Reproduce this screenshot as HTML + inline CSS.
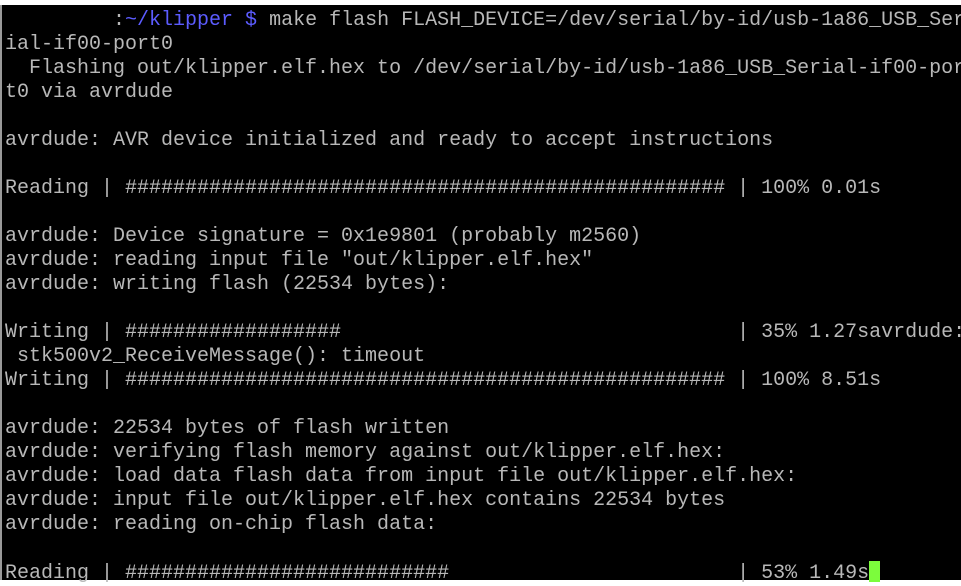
<!DOCTYPE html>
<html><head><style>
html,body{margin:0;padding:0;background:#fff;}
.t{position:absolute;left:0;top:5px;width:961px;height:575px;background:#000;border-left:2px solid #9a9a9a;box-sizing:border-box;}
pre{position:absolute;left:3px;top:4px;margin:0;font-family:"Liberation Mono","Courier New",monospace;font-size:20px;line-height:24px;color:#b8b8b8;white-space:pre;}
.b{color:#5c5cff}
.c{display:inline-block;width:11px;height:21px;background:#7cfc3c;vertical-align:-4px;}
</style></head><body><div class="t"><pre>         :<span class="b">~/klipper $</span> make flash FLASH_DEVICE=/dev/serial/by-id/usb-1a86_USB_Ser
ial-if00-port0
  Flashing out/klipper.elf.hex to /dev/serial/by-id/usb-1a86_USB_Serial-if00-por
t0 via avrdude

avrdude: AVR device initialized and ready to accept instructions

Reading | ################################################## | 100% 0.01s

avrdude: Device signature = 0x1e9801 (probably m2560)
avrdude: reading input file "out/klipper.elf.hex"
avrdude: writing flash (22534 bytes):

Writing | ##################                                 | 35% 1.27savrdude:
 stk500v2_ReceiveMessage(): timeout
Writing | ################################################## | 100% 8.51s

avrdude: 22534 bytes of flash written
avrdude: verifying flash memory against out/klipper.elf.hex:
avrdude: load data flash data from input file out/klipper.elf.hex:
avrdude: input file out/klipper.elf.hex contains 22534 bytes
avrdude: reading on-chip flash data:

Reading | ###########################                        | 53% 1.49s<span class="c"></span></pre></div></body></html>
